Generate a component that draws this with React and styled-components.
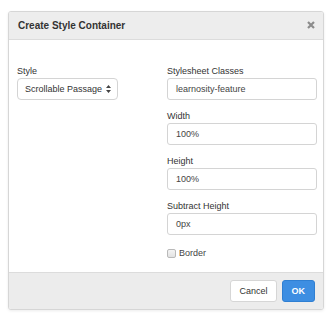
import React from 'react';
import styled, { createGlobalStyle } from 'styled-components';

const GlobalStyle = createGlobalStyle`
  html, body {
    margin: 0;
    padding: 0;
    background: #ffffff;
  }
  body {
    font-family: 'Liberation Sans', Arial, sans-serif;
    color: #333;
  }
`;

const Page = styled.div`
  width: 335px;
  height: 320px;
  padding: 11px 11px 0 8px;
  box-sizing: border-box;
`;

const Dialog = styled.div`
  width: 316px;
  border: 1px solid #d6d6d6;
  border-radius: 3px;
  background: #fff;
  box-shadow: 0 1px 3px rgba(0, 0, 0, 0.08);
  box-sizing: border-box;
  overflow: hidden;
`;

const Header = styled.div`
  height: 27px;
  display: flex;
  align-items: center;
  justify-content: space-between;
  padding: 0 8px 0 9px;
  background: #ededed;
  border-bottom: 1px solid #dcdcdc;
`;

const Title = styled.div`
  font-size: 10px;
  font-weight: bold;
  color: #333;
`;

const Close = styled.div`
  display: flex;
  align-items: center;
  color: #8c8c8c;
  margin-top: -2px;
`;

const Body = styled.div`
  display: grid;
  grid-template-columns: 150px 150px;
  padding: 26px 7px 13px 8px;
`;

const Column = styled.div`
  display: flex;
  flex-direction: column;
  align-items: flex-start;
`;

const Field = styled.div`
  display: flex;
  flex-direction: column;
  align-items: stretch;
  align-self: stretch;
  margin-bottom: 11px;
`;

const Label = styled.label`
  font-size: 9px;
  line-height: 11px;
  color: #333;
  margin-bottom: 1px;
`;

const Input = styled.div`
  height: 22px;
  border: 1px solid #d4d4d4;
  border-radius: 3px;
  box-sizing: border-box;
  display: flex;
  align-items: center;
  padding: 0 8px;
  font-size: 9px;
  color: #444;
  background: #fff;
`;

const SelectBox = styled.div`
  width: 101px;
  height: 22px;
  border: 1px solid #d4d4d4;
  border-radius: 4px;
  box-sizing: border-box;
  display: flex;
  align-items: center;
  justify-content: space-between;
  padding: 0 6px 0 7px;
  font-size: 9px;
  color: #333;
  background: #fff;
`;

const CheckRow = styled.div`
  display: flex;
  align-items: center;
  gap: 3px;
  margin-top: 2px;
  font-size: 9px;
  line-height: 11px;
  color: #444;
`;

const CheckBox = styled.span`
  width: 9px;
  height: 9px;
  border: 1px solid #b9b9b9;
  border-radius: 2px;
  box-sizing: border-box;
  background: linear-gradient(#f4f4f4, #e2e2e2);
`;

const Footer = styled.div`
  height: 36px;
  display: flex;
  align-items: center;
  justify-content: flex-end;
  gap: 5px;
  padding: 0 8px;
  background: #ececec;
  border-top: 1px solid #dcdcdc;
`;

const Button = styled.button`
  height: 22px;
  padding: 0 ${(p) => (p.$primary ? '9px' : '8px')};
  border-radius: 3px;
  font-family: 'Liberation Sans', Arial, sans-serif;
  font-size: 9px;
  font-weight: ${(p) => (p.$primary ? 'bold' : 'normal')};
  color: ${(p) => (p.$primary ? '#fff' : '#333')};
  background: ${(p) => (p.$primary ? '#3d8ee2' : '#fff')};
  border: 1px solid ${(p) => (p.$primary ? '#2f7fd2' : '#d6d6d6')};
  cursor: pointer;
`;

const fields = [
  { label: 'Stylesheet Classes', value: 'learnosity-feature' },
  { label: 'Width', value: '100%' },
  { label: 'Height', value: '100%' },
  { label: 'Subtract Height', value: '0px' },
];

function App() {
  return (
    <>
      <GlobalStyle />
      <Page>
        <Dialog>
          <Header>
            <Title>Create Style Container</Title>
            <Close>
              <svg width="8" height="8" viewBox="0 0 8 8">
                <path d="M1 1 L7 7 M7 1 L1 7" stroke="currentColor" strokeWidth="2.2" />
              </svg>
            </Close>
          </Header>
          <Body>
            <Column>
              <Field>
                <Label>Style</Label>
                <SelectBox>
                  <span>Scrollable Passage</span>
                  <svg width="5" height="8" viewBox="0 0 5 8">
                    <path d="M2.5 0 L5 3 L0 3 Z M2.5 8 L5 5 L0 5 Z" fill="#444" />
                  </svg>
                </SelectBox>
              </Field>
            </Column>
            <Column>
              {fields.map((f) => (
                <Field key={f.label}>
                  <Label>{f.label}</Label>
                  <Input>{f.value}</Input>
                </Field>
              ))}
              <CheckRow>
                <CheckBox />
                <span>Border</span>
              </CheckRow>
            </Column>
          </Body>
          <Footer>
            <Button>Cancel</Button>
            <Button $primary>OK</Button>
          </Footer>
        </Dialog>
      </Page>
    </>
  );
}

export default App;
